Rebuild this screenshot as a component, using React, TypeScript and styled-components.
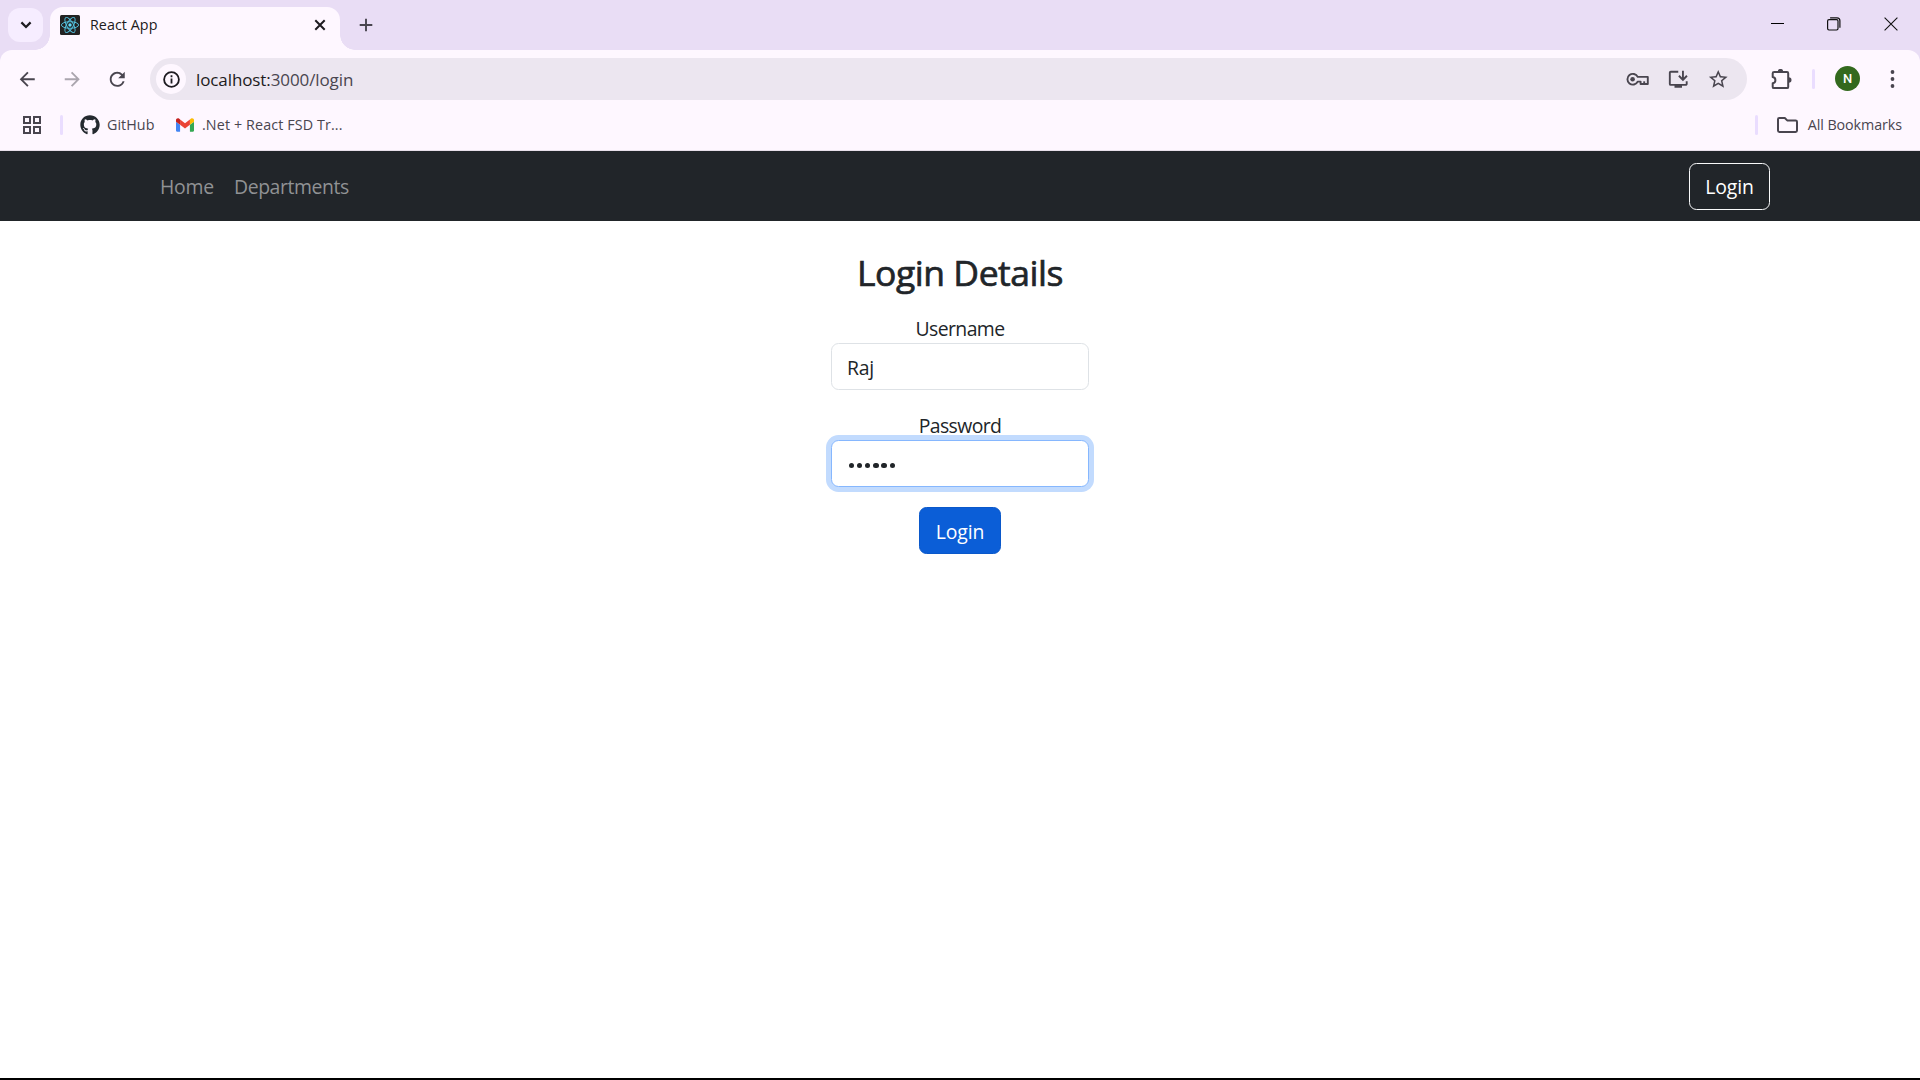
import React from 'react';
import styled, { createGlobalStyle } from 'styled-components';
import { MdArrowBack, MdArrowForward, MdRefresh, MdStarBorder, MdInstallDesktop } from 'react-icons/md';
import { FaGithub } from 'react-icons/fa';

const GlobalStyle = createGlobalStyle`
  *, *::before, *::after { box-sizing: border-box; }
  body { margin: 0; overflow: hidden; }
  svg { display: block; flex: none; }
`;

const fontStack = "'Segoe UI', 'Open Sans', 'Noto Sans', sans-serif";

const Screen = styled.div`
  width: 1920px;
  height: 1080px;
  display: flex;
  flex-direction: column;
  background: #fff;
  border-bottom: 2px solid #000;
  font-family: ${fontStack};
  overflow: hidden;
`;

const TabStrip = styled.div`
  height: 50px;
  flex: none;
  display: flex;
  align-items: flex-start;
  padding: 7px 0 0 8px;
  background: #e9ddf5;
`;

const TabSearch = styled.div`
  width: 35px;
  height: 34px;
  margin-top: 1px;
  border-radius: 12px;
  background: #f6edff;
  display: flex;
  align-items: center;
  justify-content: center;
`;

const Tab = styled.div`
  position: relative;
  width: 290px;
  height: 43px;
  margin-left: 7px;
  padding: 0 14px 7px 10px;
  border-radius: 13px 13px 0 0;
  background: #fef7ff;
  display: flex;
  align-items: center;
  &::before, &::after {
    content: '';
    position: absolute;
    bottom: 0;
    width: 15px;
    height: 15px;
  }
  &::before { left: -15px; background: radial-gradient(circle at 0 0, transparent 14.5px, #fef7ff 15px); }
  &::after { right: -15px; background: radial-gradient(circle at 100% 0, transparent 14.5px, #fef7ff 15px); }
`;

const Text = styled.span<{ $size: number; $color: string; $spacing?: number; $shift?: number }>`
  font-size: ${p => p.$size}px;
  line-height: 24px;
  color: ${p => p.$color};
  letter-spacing: ${p => p.$spacing ?? 0}px;
  margin-top: ${p => p.$shift ?? 0}px;
  white-space: nowrap;
`;

const TabTitle = styled(Text)`
  flex: 1;
  margin-left: 10px;
`;

const NewTab = styled.div`
  margin: 11px 0 0 18.5px;
`;

const WindowControls = styled.div`
  margin-left: auto;
  display: flex;
  align-items: center;
  height: 34px;
  gap: 43px;
  padding-right: 22px;
`;

const ToolbarBacking = styled.div`
  flex: none;
  background: #e9ddf5;
`;

const Toolbar = styled.div`
  height: 57px;
  display: flex;
  align-items: flex-start;
  padding: 8px 0 0 16px;
  border-radius: 12px 12px 0 0;
  background: #fef7ff;
`;

const NavIcons = styled.div`
  display: flex;
  align-items: center;
  height: 42px;
  gap: 22.5px;
`;

const NavIcon = styled.span<{ $muted?: boolean }>`
  color: ${p => (p.$muted ? '#aaa5ae' : '#49454f')};
`;

const AddressBar = styled.div`
  width: 1597px;
  height: 42px;
  flex: none;
  margin-left: 21.5px;
  padding: 0 18px 0 6px;
  border-radius: 21px;
  background: #ece6f0;
  display: flex;
  align-items: center;
`;

const SiteInfo = styled.div`
  width: 30px;
  height: 30px;
  border-radius: 50%;
  background: #fef7ff;
  display: flex;
  align-items: center;
  justify-content: center;
`;

const Url = styled(Text)`
  flex: 1;
  margin-left: 10px;
  b { font-weight: 400; color: #1d1b20; }
`;

const AddressActions = styled.div`
  display: flex;
  align-items: center;
  gap: 17.5px;
  color: #49454f;
`;

const ToolbarEnd = styled.div`
  display: flex;
  align-items: center;
  height: 42px;
  margin-left: 24px;
`;

const Separator = styled.i<{ $left?: number; $right?: number }>`
  width: 3px;
  height: 20px;
  border-radius: 2px;
  background: #eaddff;
  margin: 0 ${p => p.$right ?? 0}px 0 ${p => p.$left ?? 0}px;
`;

const Avatar = styled.div`
  width: 25px;
  height: 25px;
  border-radius: 50%;
  background: #33691e;
  color: #fff;
  font: 500 13px/25px Roboto, sans-serif;
  text-align: center;
  margin: 0 30px 1px 0;
`;

const BookmarksBar = styled.div`
  height: 44px;
  flex: none;
  display: flex;
  align-items: center;
  padding: 0 18px 8px 23px;
  background: #fef7ff;
  border-bottom: 1px solid #e7dfe9;
`;

const Bookmark = styled.div<{ $gap: number; $after?: number }>`
  display: flex;
  align-items: center;
  gap: ${p => p.$gap}px;
  margin-right: ${p => p.$after ?? 0}px;
  color: #24292f;
`;

const Spacer = styled.div`
  flex: 1;
`;

const SiteNav = styled.nav`
  height: 70px;
  flex: none;
  display: flex;
  align-items: center;
  justify-content: space-between;
  padding: 0 150px 0 160px;
  background: #212529;
`;

const NavLinks = styled.div`
  display: flex;
  gap: 20px;
  padding-top: 2px;
`;

const Button = styled.button<{ $filled?: boolean }>`
  width: ${p => (p.$filled ? 82 : 81)}px;
  height: 47px;
  padding: ${p => (p.$filled ? 1 : 0)}px 0 0;
  border: 1px solid ${p => (p.$filled ? '#0a58ca' : '#f8f9fa')};
  border-radius: 7.5px;
  background: ${p => (p.$filled ? '#0b5ed7' : 'transparent')};
  color: #fff;
  font: 400 19.4px/45px ${fontStack};
  letter-spacing: -0.1px;
`;

const LoginForm = styled.form`
  display: flex;
  flex-direction: column;
  align-items: center;
  padding-top: 29px;
`;

const Heading = styled.h2`
  margin: 0 0 19px;
  font-size: 35.5px;
  line-height: 44px;
  font-weight: 400;
  -webkit-text-stroke: 0.7px #212529;
  letter-spacing: -0.45px;
  color: #212529;
`;

const Label = styled.label`
  height: 30px;
  padding-top: 1px;
  font-size: 19.4px;
  line-height: 30px;
  letter-spacing: -0.6px;
  color: #212529;
`;

const Field = styled.div<{ $focus?: boolean }>`
  width: 258px;
  height: 47px;
  margin-bottom: 20px;
  padding: 0 15px;
  border: 1px solid ${p => (p.$focus ? '#86b7fe' : '#dee2e6')};
  border-radius: 7.5px;
  background: #fff;
  box-shadow: ${p => (p.$focus ? '0 0 0 5px #c2dbfe' : 'none')};
  display: flex;
  align-items: center;
`;

const Mask = styled.div`
  display: flex;
  gap: 2.9px;
  margin: 4px 0 0 1.7px;
`;

const Dot = styled.i`
  width: 5.3px;
  height: 5.3px;
  border-radius: 50%;
  background: #212529;
`;

const Gmail = () => (
  <svg width="18" height="14" viewBox="52 42 88 66">
    <path fill="#4285f4" d="M58 108h14V74L52 59v43c0 3.32 2.69 6 6 6" />
    <path fill="#34a853" d="M120 108h14c3.32 0 6-2.69 6-6V59l-20 15" />
    <path fill="#fbbc04" d="M120 48v26l20-15v-8c0-7.42-8.47-11.65-14.4-7.2" />
    <path fill="#ea4335" d="M72 74V48l24 18 24-18v26L96 92" />
    <path fill="#c5221f" d="M52 51v8l20 15V48l-5.6-4.2c-5.94-4.45-14.4-.22-14.4 7.2" />
  </svg>
);

const ReactLogo = () => (
  <svg width="20" height="20" viewBox="0 0 20 20">
    <rect width="20" height="20" rx="1.5" fill="#222" />
    <g fill="none" stroke="#53c1de" strokeWidth="0.95">
      <ellipse cx="10" cy="10" rx="8.6" ry="3.3" />
      <ellipse cx="10" cy="10" rx="8.6" ry="3.3" transform="rotate(60 10 10)" />
      <ellipse cx="10" cy="10" rx="8.6" ry="3.3" transform="rotate(120 10 10)" />
    </g>
    <circle cx="10" cy="10" r="1.7" fill="#61dafb" />
  </svg>
);

const KeyIcon = () => (
  <svg width="23" height="14" viewBox="0 0 23 14" fill="none" stroke="currentColor" strokeWidth="1.9">
    <path d="M11.7 4.9A5.4 5.4 0 1 0 11.7 9.6H14.6V12H21.8V4.9Z" strokeLinejoin="round" />
    <path d="M18.2 12V9.3" />
    <circle cx="6.6" cy="7.2" r="2.3" fill="currentColor" stroke="none" />
  </svg>
);

const ExtensionIcon = () => (
  <svg width="21" height="21" viewBox="0 0 21 21">
    <path d="M3.2 3.1H16Q17.2 3.1 17.2 4.3V17.9Q17.2 19.1 16 19.1H3Q1.7 19.1 1.7 17.9V14.2C5.3 13.6 5.3 8.7 1.7 8.1V4.3Q1.7 3.1 3.2 3.1Z" fill="none" stroke="#49454f" strokeWidth="2" strokeLinejoin="round" />
    <path d="M6.8 2.6a2.7 2.7 0 0 1 5.4 0zM17.7 8.2a2.7 2.7 0 0 1 0 5.6z" fill="#49454f" />
  </svg>
);

export default function App() {
  return (
    <>
      <GlobalStyle />
      <Screen>
        <TabStrip>
          <TabSearch>
            <svg width="12" height="8" viewBox="0 0 12 8" fill="none" stroke="#1d1b20" strokeWidth="2.2"><path d="M1.4 1.4 6 6l4.6-4.6" /></svg>
          </TabSearch>
          <Tab>
            <ReactLogo />
            <TabTitle $size={14.3} $color="#1d1b20" $spacing={0.05}>React App</TabTitle>
            <svg width="12" height="12" viewBox="0 0 12 12" stroke="#1d1b20" strokeWidth="2"><path d="m1.3 1.3 9.4 9.4M10.7 1.3 1.3 10.7" /></svg>
          </Tab>
          <NewTab>
            <svg width="14" height="14" viewBox="0 0 14 14" stroke="#49454f" strokeWidth="1.9"><path d="M7 .7v12.6M.7 7h12.6" /></svg>
          </NewTab>
          <WindowControls>
            <svg width="13" height="14" viewBox="0 0 13 14" stroke="#000"><path d="M0 6.5h13" /></svg>
            <svg width="14" height="14" viewBox="0 0 14 14" fill="none" stroke="#111" strokeWidth="1.2"><rect x=".6" y="2.6" width="10.4" height="10.4" rx="1.4" /><path d="M3.1.8H10Q12.9.8 12.9 3.8V10.8" /></svg>
            <svg width="14" height="14" viewBox="0 0 14 14" stroke="#111" strokeWidth="1.1"><path d="m.6.6 12.8 12.8M13.4.6.6 13.4" /></svg>
          </WindowControls>
        </TabStrip>

        <ToolbarBacking>
          <Toolbar>
            <NavIcons>
              <NavIcon><MdArrowBack size={22.5} /></NavIcon>
              <NavIcon $muted><MdArrowForward size={22.5} /></NavIcon>
              <NavIcon><MdRefresh size={22.5} /></NavIcon>
            </NavIcons>
            <AddressBar>
              <SiteInfo>
                <svg width="17" height="17" viewBox="0 0 17 17"><circle cx="8.5" cy="8.5" r="7.4" fill="none" stroke="#1d1b20" strokeWidth="1.8" /><path d="M7.6 7.5h1.8v5H7.6zM7.6 4.3h1.8v1.9H7.6z" fill="#1d1b20" /></svg>
              </SiteInfo>
              <Url $size={17} $color="#49454f" $spacing={-0.1} $shift={1}><b>localhost:</b>3000/login</Url>
              <AddressActions>
                <KeyIcon />
                <MdInstallDesktop size={22.5} />
                <MdStarBorder size={22.5} />
              </AddressActions>
            </AddressBar>
            <ToolbarEnd>
              <ExtensionIcon />
              <Separator $left={20} $right={20} />
              <Avatar>N</Avatar>
              <svg width="5" height="18" viewBox="0 0 5 18" fill="#49454f"><circle cx="2.5" cy="2" r="1.9" /><circle cx="2.5" cy="9" r="1.9" /><circle cx="2.5" cy="16" r="1.9" /></svg>
            </ToolbarEnd>
          </Toolbar>
        </ToolbarBacking>

        <BookmarksBar>
          <svg width="18" height="18" viewBox="0 0 18 18" fill="none" stroke="#49454f" strokeWidth="2"><path d="M1 1h6v6H1zM11 1h6v6h-6zM1 11h6v6H1zM11 11h6v6h-6z" /></svg>
          <Separator $left={19} $right={17} />
          <Bookmark $gap={7} $after={21.5}>
            <FaGithub size={20} />
            <Text $size={14.3} $color="#49454f" $spacing={0.05}>GitHub</Text>
          </Bookmark>
          <Bookmark $gap={8}>
            <Gmail />
            <Text $size={14.3} $color="#49454f" $spacing={0.12}>.Net + React FSD Tr...</Text>
          </Bookmark>
          <Spacer />
          <Separator $right={19} />
          <Bookmark $gap={10}>
            <svg width="21" height="16" viewBox="0 0 21 16" fill="none" stroke="#49454f" strokeWidth="2" strokeLinejoin="round"><path d="M2.3 1H7.8l2.4 2.4h8.4Q20 3.4 20 4.7V13.6Q20 15 18.6 15H2.4Q1 15 1 13.6V2.3Q1 1 2.3 1Z" /></svg>
            <Text $size={14.3} $color="#49454f" $spacing={-0.08}>All Bookmarks</Text>
          </Bookmark>
        </BookmarksBar>

        <SiteNav>
          <NavLinks>
            <Text $size={19.4} $color="#909294" $spacing={-0.2}>Home</Text>
            <Text $size={19.4} $color="#909294" $spacing={-0.42}>Departments</Text>
          </NavLinks>
          <Button type="button">Login</Button>
        </SiteNav>

        <LoginForm>
          <Heading>Login Details</Heading>
          <Label>Username</Label>
          <Field><Text $size={19.4} $color="#212529" $spacing={-0.3} $shift={2}>Raj</Text></Field>
          <Label>Password</Label>
          <Field $focus>
            <Mask>{Array.from({ length: 6 }, (_, i) => <Dot key={i} />)}</Mask>
          </Field>
          <Button type="button" $filled>Login</Button>
        </LoginForm>
      </Screen>
    </>
  );
}
